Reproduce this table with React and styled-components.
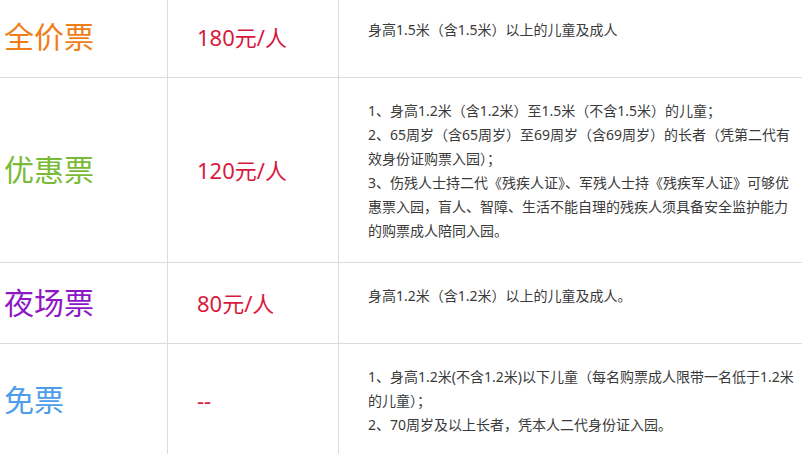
import React from "react";
import styled, { createGlobalStyle } from "styled-components";

const GlobalStyle = createGlobalStyle`
  html, body {
    margin: 0;
    padding: 0;
    background: #fff;
    overflow: hidden;
  }
  body {
    font-family: "Noto Sans", "Noto Sans CJK SC", sans-serif;
  }
`;

const Table = styled.div`
  display: grid;
  grid-template-columns: 168px 171px 463px;
  margin-top: -3px;
`;

const Cell = styled.div`
  border-right: 1px solid #dcdcdc;
  border-bottom: 1px solid #dcdcdc;
  box-sizing: border-box;
  min-height: 81px;
`;

const NameCell = styled(Cell)`
  display: flex;
  align-items: center;
  padding-left: 4px;
  font-size: 30px;
  line-height: 40px;
  color: ${(props) => props.color};
`;

const PriceCell = styled(Cell)`
  display: flex;
  align-items: center;
  padding-left: 29px;
  font-size: 22px;
  line-height: 30px;
  color: #d8193e;
`;

const DescCell = styled(Cell)`
  border-right: none;
  padding: 21px 2px 19px 29px;
  font-size: 14px;
  line-height: 24px;
  color: #3a3a3a;
`;

const Line = styled.div``;

const rows = [
  {
    name: "全价票",
    color: "#ef7e19",
    price: "180元/人",
    desc: ["身高1.5米（含1.5米）以上的儿童及成人"],
  },
  {
    name: "优惠票",
    color: "#79bb37",
    price: "120元/人",
    desc: [
      "1、身高1.2米（含1.2米）至1.5米（不含1.5米）的儿童；",
      "2、65周岁（含65周岁）至69周岁（含69周岁）的长者（凭第二代有效身份证购票入园）；",
      "3、伤残人士持二代《残疾人证》、军残人士持《残疾军人证》可够优惠票入园，盲人、智障、生活不能自理的残疾人须具备安全监护能力的购票成人陪同入园。",
    ],
  },
  {
    name: "夜场票",
    color: "#8f16c6",
    price: "80元/人",
    desc: ["身高1.2米（含1.2米）以上的儿童及成人。"],
  },
  {
    name: "免票",
    color: "#4c9eea",
    price: "--",
    desc: [
      "1、身高1.2米(不含1.2米)以下儿童（每名购票成人限带一名低于1.2米的儿童）；",
      "2、70周岁及以上长者，凭本人二代身份证入园。",
    ],
  },
];

const App = () => {
  return (
    <>
      <GlobalStyle />
      <Table>
        {rows.map((row) => (
          <React.Fragment key={row.name}>
            <NameCell color={row.color}>{row.name}</NameCell>
            <PriceCell>{row.price}</PriceCell>
            <DescCell>
              {row.desc.map((line) => (
                <Line key={line}>{line}</Line>
              ))}
            </DescCell>
          </React.Fragment>
        ))}
      </Table>
    </>
  );
};

export default App;
